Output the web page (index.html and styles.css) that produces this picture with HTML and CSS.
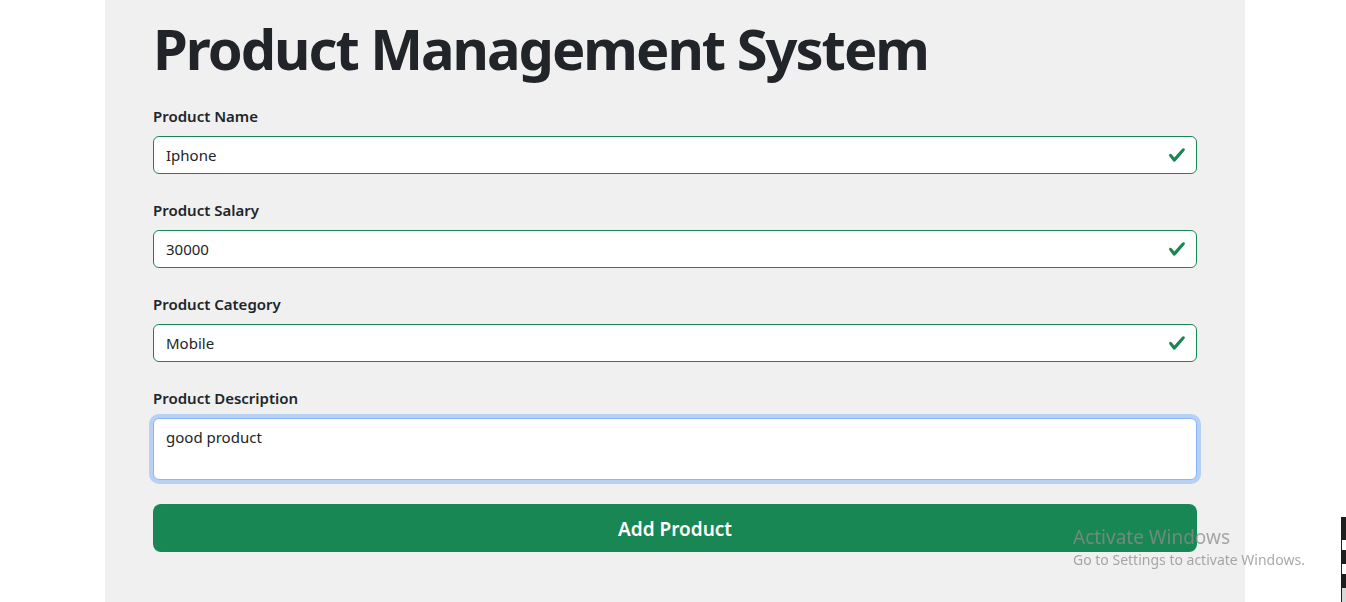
FILE: index.html
```html
<!DOCTYPE html>
<html lang="en">
<head>
<meta charset="utf-8">
<title>Product Management System</title>
<link rel="stylesheet" href="styles.css">
</head>
<body>
<main class="container">
  <h1 class="title">Product Management System</h1>
  <form class="form">
    <div class="group">
      <label class="label" for="name">Product Name</label>
      <div class="input valid" id="name">Iphone</div>
    </div>
    <div class="group">
      <label class="label" for="salary">Product Salary</label>
      <div class="input valid" id="salary">30000</div>
    </div>
    <div class="group">
      <label class="label" for="cat">Product Category</label>
      <div class="input valid" id="cat">Mobile</div>
    </div>
    <div class="group">
      <label class="label" for="desc">Product Description</label>
      <div class="input textarea focus" id="desc">good product</div>
    </div>
    <button type="button" class="btn">Add Product</button>
  </form>
</main>
<div class="watermark">
  <div class="wm-title">Activate Windows</div>
  <div class="wm-sub">Go to Settings to activate Windows.</div>
</div>
<div class="edge"><span></span><span></span><span class="box"></span></div>
</body>
</html>
```
FILE: styles.css
```css
html, body { margin: 0; padding: 0; }
body {
  background: #ffffff;
  font-family: "Noto Sans", "Open Sans", sans-serif;
  color: #212529;
  padding-left: 4px;
  height: 602px;
  overflow: hidden;
}
.container {
  width: 1140px;
  box-sizing: border-box;
  margin: 0 auto;
  background: #f0f0f0;
  padding: 15px 48px 60px;
  min-height: 602px;
}
.title {
  margin: 0 0 22px;
  font-size: 56px;
  line-height: 1.2;
  font-weight: 700;
  letter-spacing: -2px;
}
.form { display: flex; flex-direction: column; }
.group { display: flex; flex-direction: column; margin-bottom: 24px; }
.label {
  font-size: 15px;
  line-height: 24px;
  font-weight: 600;
  margin-bottom: 8px;
}
.input {
  box-sizing: border-box;
  height: 38px;
  border: 1px solid #198754;
  border-radius: 6px;
  background: #fff;
  padding: 6px 12px;
  font-size: 15px;
  line-height: 24px;
}
.valid {
  background-image: url("data:image/svg+xml,%3csvg xmlns='http://www.w3.org/2000/svg' viewBox='0 0 8 8'%3e%3cpath fill='%23198754' d='M2.3 6.73.6 4.53c-.4-1.04.46-1.4 1.1-.8l1.1 1.4 3.4-3.8c.6-.63 1.6-.27 1.2.7l-4 4.6c-.43.5-.8.4-1.1.1z'/%3e%3c/svg%3e");
  background-repeat: no-repeat;
  background-position: right 10px center;
  background-size: 18px 18px;
}
.textarea { height: 62px; }
.focus {
  border-color: #86b7fe;
  box-shadow: 0 0 0 4px rgba(13, 110, 253, 0.25);
}
.btn {
  height: 48px;
  border: 0;
  border-radius: 8px;
  background: #198754;
  color: #fff;
  font-family: inherit;
  font-size: 19px;
  font-weight: 600;
  padding: 0;
  line-height: 50px;
}
.watermark {
  position: fixed;
  left: 1073px;
  top: 525px;
  color: rgba(140, 140, 140, 0.75);
  font-family: "Noto Sans", sans-serif;
}
.wm-title { font-size: 19px; line-height: 24px; }
.wm-sub { font-size: 14px; line-height: 22px; }
.edge {
  position: fixed;
  left: 1341px;
  top: 517px;
  width: 5px;
  height: 85px;
  background: #1e1e1e;
  display: flex;
  flex-direction: column;
  gap: 14px;
  padding-top: 23px;
  box-sizing: border-box;
  align-items: flex-end;
}
.edge span { width: 4px; height: 11px; background: #fff; }
.edge .box { background: #d8d8d8; height: 16px; }
```
